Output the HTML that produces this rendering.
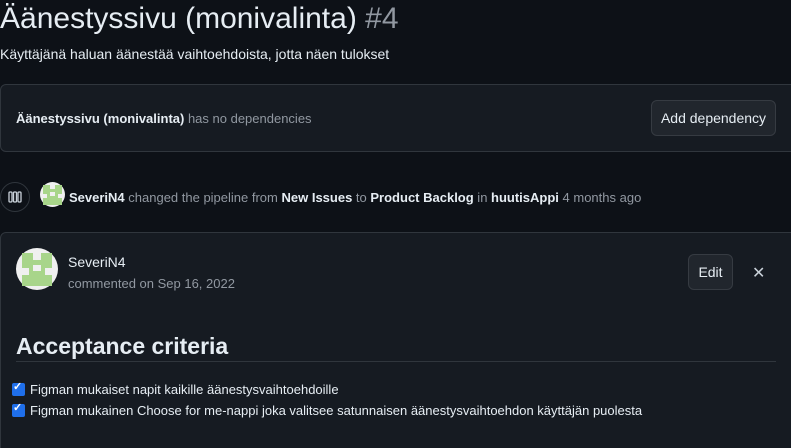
<!DOCTYPE html>
<html><head><meta charset="utf-8"><style>
*{margin:0;padding:0;box-sizing:border-box}
html,body{width:791px;height:448px;overflow:hidden}
body{background:#0d1117;color:#e6edf3;font-family:"Liberation Sans",sans-serif;position:relative}
.a{position:absolute;white-space:nowrap}
.card{position:absolute;background:#161b22;border:1px solid #30363d;border-radius:6px}
.btn{position:absolute;background:#21262d;border:1px solid #363b42;border-radius:6px;color:#e6edf3;font-size:14px;text-align:center}
.m{color:#9198a1}
.cb{position:absolute;width:13px;height:13px;background:#1f6feb;border-radius:2px}
</style></head><body>
<div class="a" style="left:0;top:0;font-size:30px;line-height:38px">Äänestyssivu (monivalinta) <span class="m">#4</span></div>
<div class="a" style="left:0;top:46px;font-size:14px">Käyttäjänä haluan äänestää vaihtoehdoista, jotta näen tulokset</div>
<div class="card" style="left:0;top:84px;width:800px;height:68px"></div>
<div class="a" style="left:16px;top:111px;font-size:13px"><b>Äänestyssivu (monivalinta)</b> <span class="m">has no dependencies</span></div>
<div class="btn" style="left:651px;top:100px;width:125px;height:36px;line-height:34px">Add dependency</div>
<div class="a" style="left:0;top:182px;width:30px;height:30px;border:1px solid #30363d;border-radius:50%;background:#0d1117"></div>
<svg class="a" style="left:8px;top:191px" width="14" height="12"><g fill="none" stroke="#c9d1d9" stroke-width="1.3"><rect x="1" y="1" width="3" height="10" rx="1"/><rect x="5.5" y="1" width="3" height="10" rx="1"/><rect x="10" y="1" width="3" height="10" rx="1"/></g></svg>
<svg class="a" style="left:40px;top:182px" width="25" height="25"><circle cx="12.5" cy="12.5" r="12.5" fill="#f0f0f0"/><path d="M3 3h7v4h5V3h7v9h-4v4h4v7H3v-7h4v-4H3z" fill="#a8d58a"/><path d="M10 10h5v4h-5z" fill="#f0f0f0"/></svg>
<div class="a" style="left:69px;top:190px;font-size:13px;color:#9198a1"><b style="color:#e6edf3">SeveriN4</b> changed the pipeline from <b style="color:#e6edf3">New Issues</b> to <b style="color:#e6edf3">Product Backlog</b> in <b style="color:#e6edf3">huutisAppi</b> 4 months ago</div>
<div class="card" style="left:0;top:232px;width:800px;height:230px"></div>
<svg class="a" style="left:16px;top:248px" width="42" height="42"><circle cx="21" cy="21" r="21" fill="#f0f0f0"/><path d="M6 5h11v7h8V5h11v15h-7v7h7v11H6V27h7v-7H6z" fill="#a8d58a"/><path d="M17 17h8v6h-8z" fill="#f0f0f0"/></svg>
<div class="a" style="left:68px;top:254px;font-size:14px">SeveriN4</div>
<div class="a m" style="left:68px;top:276px;font-size:13px">commented on Sep 16, 2022</div>
<div class="btn" style="left:688px;top:254px;width:45px;height:36px;line-height:34px">Edit</div>
<div class="a" style="left:752px;top:263px;font-size:16px;color:#c9d1d9">✕</div>
<div class="a" style="left:16px;top:333px;font-size:23px;font-weight:bold">Acceptance criteria</div>
<div class="a" style="left:16px;top:361px;width:760px;height:1px;background:#30363d"></div>
<div class="cb" style="left:12px;top:383px"></div><div class="a" style="left:13px;top:380px;font-size:11px;color:#fff;font-weight:bold">✓</div>
<div class="a" style="left:30px;top:382px;font-size:13px">Figman mukaiset napit kaikille äänestysvaihtoehdoille</div>
<div class="cb" style="left:12px;top:404px"></div><div class="a" style="left:13px;top:401px;font-size:11px;color:#fff;font-weight:bold">✓</div>
<div class="a" style="left:30px;top:403px;font-size:13px">Figman mukainen Choose for me-nappi joka valitsee satunnaisen äänestysvaihtoehdon käyttäjän puolesta</div>
</body></html>
